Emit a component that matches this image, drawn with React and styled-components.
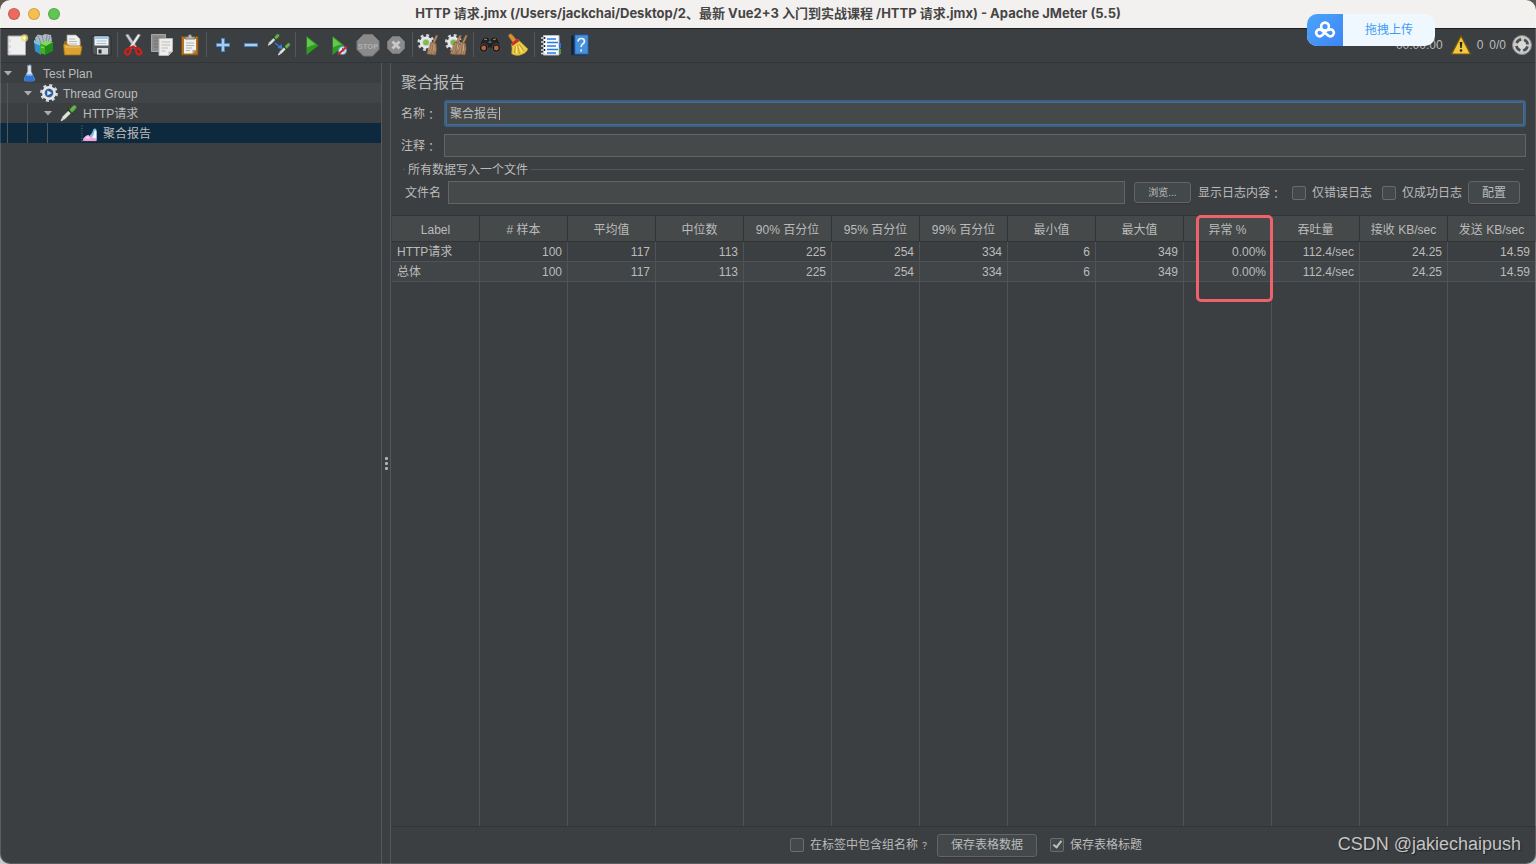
import React from "react";
import styled, { createGlobalStyle, css } from "styled-components";

const GlobalStyle = createGlobalStyle`
  *, *::before, *::after { box-sizing: border-box; }
  html, body { margin: 0; padding: 0; }
  body {
    background: linear-gradient(#5d574f, #c9c9c9);
    color: #bbbbbb;
    font: 12px/20px "Liberation Sans", "Noto Sans CJK SC", sans-serif;
  }
  button, input { font: inherit; color: inherit; margin: 0; }
`;

const Window = styled.div`
  position: relative;
  display: flex;
  flex-direction: column;
  min-height: 100vh;
  overflow: hidden;
  border-radius: 10px;
  background: #3c3f41;
  &::after {
    content: "";
    position: absolute;
    inset: 0;
    border: 1px solid rgba(255, 255, 255, 0.16);
    border-top: 0;
    border-radius: 10px;
    pointer-events: none;
  }
`;

const TitleBar = styled.header`
  position: relative;
  display: flex;
  align-items: center;
  justify-content: center;
  height: 29px;
  padding-bottom: 2px;
  background: #f3f1f0;
  border-bottom: 1px solid #1c1e20;
`;

const Lights = styled.div`
  position: absolute;
  left: 8px;
  top: 8px;
  display: flex;
  gap: 8px;
`;

const Light = styled.button`
  width: 12px;
  height: 12px;
  padding: 0;
  border: 1px solid rgba(0, 0, 0, 0.15);
  border-radius: 50%;
  background: ${(p) => p.$color};
`;

const WindowTitle = styled.h1`
  margin: 0;
  color: #464544;
  font: 700 13px/20px Inter, "Noto Sans CJK SC", sans-serif;
  white-space: pre;
`;

const Toolbar = styled.nav`
  display: flex;
  align-items: center;
  height: 34px;
  padding: 0 4px 2px 3px;
  border-bottom: 1px solid #323537;
`;

const ToolButton = styled.button`
  display: flex;
  align-items: center;
  justify-content: center;
  width: 28px;
  height: 28px;
  padding: 0;
  border: 0;
  background: none;
  svg { display: block; width: 24px; height: 24px; }
`;

const ToolSeparator = styled.span`
  width: 5px;
  height: 25px;
  background: linear-gradient(#555859, #555859) center / 1px 100% no-repeat;
`;

const Status = styled.div`
  display: flex;
  align-items: center;
  gap: 6px;
  margin-left: auto;
  svg { display: block; }
`;

const Elapsed = styled.time`
  margin-right: 2px;
`;

const UploadBadge = styled.button`
  position: absolute;
  z-index: 2;
  top: 14px;
  right: 101px;
  display: flex;
  width: 128px;
  height: 32px;
  padding: 0;
  overflow: hidden;
  border: 0;
  border-radius: 10px;
  background: #f0f8ff;
  color: #3f9bf5;
  line-height: 32px;
`;

const UploadIcon = styled.span`
  display: flex;
  align-items: center;
  justify-content: center;
  width: 36px;
  height: 32px;
  background: linear-gradient(135deg, #4aa5fa, #3f85f5);
`;

const UploadText = styled.span`
  flex: 1;
  text-align: center;
`;

const Body = styled.div`
  display: flex;
  flex: 1;
`;

const Tree = styled.ul`
  flex: none;
  width: 382px;
  margin: 0;
  padding: 0;
  list-style: none;
  border-right: 1px solid #565859;
`;

const TreeRow = styled.li`
  display: flex;
  align-items: center;
  height: 20px;
  padding-left: 3px;
  background: ${(p) => (p.$selected ? "#0d293e" : p.$striped ? "#414547" : "none")};
  svg { display: block; flex: none; }
`;

const Guide = styled.span`
  flex: none;
  width: 20px;
  height: 20px;
  background: linear-gradient(#55585a, #55585a) 4px 0 / 1px 100% no-repeat;
`;

const Caret = styled.span`
  flex: none;
  width: 10px;
  height: 5px;
  margin-right: 6px;
  background: #adadad;
  clip-path: polygon(5% 0, 95% 0, 50% 100%);
  visibility: ${(p) => (p.$hidden ? "hidden" : "visible")};
`;

const TreeLabel = styled.span`
  margin-left: 4px;
  padding-top: 2px;
  white-space: nowrap;
`;

const Splitter = styled.div`
  display: flex;
  flex: none;
  flex-direction: column;
  align-items: center;
  justify-content: center;
  gap: 2px;
  width: 9px;
  border-right: 1px solid #585755;
`;

const Grip = styled.span`
  width: 3px;
  height: 3px;
  border-radius: 1px;
  background: #afb1b3;
`;

const Report = styled.main`
  display: flex;
  flex: 1;
  flex-direction: column;
  min-width: 0;
`;

const Form = styled.form`
  display: flex;
  flex-direction: column;
  padding: 8px 10px 11px;
`;

const Heading = styled.h2`
  margin: 0 0 5px;
  font-size: 16px;
  font-weight: 400;
  line-height: 24px;
`;

const Field = styled.div`
  display: flex;
  align-items: center;
  height: 27px;
  & + & { margin-top: 5px; }
`;

const FieldLabel = styled.label`
  flex: none;
  width: 43px;
  white-space: nowrap;
`;

const TextInput = styled.input`
  flex: 1;
  min-width: 0;
  height: 23px;
  padding: 0 5px;
  border: 1px solid #646464;
  border-radius: 0;
  outline: 0;
  background: #45494a;
  ${(p) =>
    p.$focused &&
    css`
      height: 27px;
      padding: 0 4px 2px;
      border: 2px solid #3d6185;
      border-radius: 3px;
      box-shadow: inset 0 0 0 1px #466d94;
    `}
`;

const NameBox = styled.div`
  position: relative;
  display: flex;
  flex: 1;
`;

const TextCursor = styled.span`
  position: absolute;
  left: 55px;
  top: 7px;
  width: 1px;
  height: 13px;
  background: #bbbbbb;
`;

const FileGroup = styled.fieldset`
  display: flex;
  align-items: center;
  margin: 0 2px;
  padding: 2px 4px 0 2px;
  min-width: 0;
  border: 0;
  border-top: 1px solid #55585a;
`;

const Legend = styled.legend`
  height: 20px;
  padding: 0 3px;
  line-height: 22px;
`;

const Button = styled.button`
  flex: none;
  width: ${(p) => p.$width};
  height: ${(p) => (p.$small ? "21px" : "23px")};
  padding: 0;
  border: 1px solid #646464;
  border-radius: 3px;
  background: #43494a;
  box-shadow: 0 1px 1px #35383a;
  font-size: ${(p) => (p.$small ? "10px" : "12px")};
  line-height: 20px;
  white-space: nowrap;
`;

const FileActions = styled.div`
  display: flex;
  flex: none;
  align-items: center;
  margin-left: 9px;
`;

const Caption = styled.span`
  width: 94px;
  margin-left: 7px;
  white-space: nowrap;
`;

const Check = styled.label`
  display: flex;
  flex: none;
  align-items: center;
  gap: 6px;
  white-space: nowrap;
`;

const CheckInput = styled.input`
  appearance: none;
  width: 14px;
  height: 14px;
  border: 1px solid #6b6b6b;
  border-radius: 2px;
  background: #43494a;
  &:checked::after {
    content: "";
    display: block;
    width: 5px;
    height: 9px;
    margin: 0 0 0 4px;
    border: solid #c0c0c0;
    border-width: 0 2px 2px 0;
    transform: rotate(38deg);
  }
`;

const ChecksRow = styled.div`
  display: flex;
  gap: 10px;
  margin-right: 6px;
`;

const Colon = styled.span`
  font-family: "Noto Sans CJK TC", sans-serif;
  line-height: 12px;
  vertical-align: -2px;
`;

const QuestionMark = styled.span`
  margin-left: 2px;
  font-family: "Noto Sans CJK TC", sans-serif;
  font-size: 9px;
`;

const TableArea = styled.div`
  display: flex;
  flex: 1;
  padding-left: 1px;
  border-top: 1px solid #323537;
  border-bottom: 1px solid #323537;
`;

const Table = styled.table`
  width: 100%;
  border-collapse: separate;
  border-spacing: 0;
  table-layout: fixed;
`;

const Th = styled.th`
  position: relative;
  height: 26px;
  padding: 3px 0 0;
  border-right: 1px solid #323537;
  border-bottom: 1px solid #323537;
  background: #45494a;
  font-weight: 400;
  white-space: nowrap;
`;

const Td = styled.td`
  height: ${(p) => (p.$filler ? "auto" : "20px")};
  padding: ${(p) => (p.$filler ? "0" : "2px 5px 0")};
  border-right: 1px solid #505355;
  border-bottom: ${(p) => (p.$filler ? "0" : "1px solid #505355")};
  background: ${(p) => (p.$striped ? "#414547" : "none")};
  line-height: 17px;
  text-align: ${(p) => (p.$first ? "left" : "right")};
  white-space: nowrap;
`;

const Highlight = styled.span`
  position: absolute;
  z-index: 1;
  top: -1px;
  left: 12px;
  width: 77px;
  height: 87px;
  border: 3px solid #f0626b;
  border-radius: 5px;
  pointer-events: none;
`;

const Footer = styled.footer`
  position: relative;
  display: flex;
  align-items: center;
  justify-content: center;
  height: 37px;
  padding: 0 0 1px 5px;
`;

const FooterButton = styled(Button)`
  margin: 0 13px 0 8px;
`;

const Watermark = styled.span`
  position: absolute;
  right: 15px;
  top: 6px;
  color: #c4c5c6;
  font-size: 18px;
  line-height: 22px;
  text-shadow: 1px 1px 1px #202224;
`;

const Svg = ({ children, size = 24 }) => (
  <svg viewBox="0 0 24 24" width={size} height={size} aria-hidden="true">
    {children}
  </svg>
);

const Dropper = ({ x = 0, y = 0, s = 1 }) => (
  <g transform={`translate(${x} ${y}) scale(${s})`}>
    <path d="M3 17l1.500-4L11 6.500l2.500 2.500L7 15.500z" fill="#dfe4df" stroke="#858a85" strokeWidth=".7" />
    <path d="M3 17l2-1.500" stroke="#ddd" strokeWidth="1.500" />
    <path d="M9.500 5l5.500 5.500" stroke="#1f3d18" strokeWidth="2" />
    <path d="M11.500 6l3-3.500q2-2 3.500-.5t-.5 3.500L14 9z" fill="#67b151" stroke="#3e7d30" strokeWidth=".7" />
  </g>
);

const Gear = ({ cx, cy, r, core }) => (
  <g>
    <circle cx={cx} cy={cy} r={r} fill="none" stroke="#d3d7da" strokeWidth="3.500" strokeDasharray={`${(r * Math.PI) / 8} ${(r * Math.PI) / 8}`} />
    <circle cx={cx} cy={cy} r={r - 0.7} fill="#e6e8ea" />
    <circle cx={cx} cy={cy} r={r - 3.2} fill="#c4cad0" />
    <circle cx={cx} cy={cy} r={r - 4} fill={core} />
  </g>
);

const Straw = ({ x = 0 }) => (
  <g transform={`translate(${x} 0)`}>
    <path d="M19.500 2l2 .5-3.500 8-2-1z" fill="#b98b60" stroke="#6b4a30" strokeWidth=".5" />
    <path d="M14.500 9l5 1.500q1.500 5-.5 11.500l-8.500-1q-.5-1.500 1-4z" fill="#b08a66" stroke="#6f4f35" strokeWidth=".6" />
    <path d="M14.500 11l-2.500 9M16.500 11.500l-1.500 9.500M18.500 12l-1 9" stroke="#86644a" strokeWidth=".7" />
    <path d="M13.500 12l-1.500 5M17.500 12v6" stroke="#dcc09a" strokeWidth=".6" />
  </g>
);

const icons = {
  new: (
    <Svg>
      <path d="M3 3h17.500v19H3z" fill="#eeefee" stroke="#a8a8a8" />
      <path d="M5 6v3M5 12v3M5 18v2" stroke="#c5c5c5" />
      <circle cx="19.500" cy="5" r="3.700" fill="#eee26b" opacity=".75" />
      <path d="M19.500 2.500l.8 1.700 1.700.8-1.700.8-.8 1.700-.8-1.700-1.700-.8 1.700-.8z" fill="#fffde0" />
    </Svg>
  ),
  templates: (
    <Svg>
      <path d="M2 5l3-3.500 4 1L12 1l6 1 1 6-7 4-9-3z" fill="#aebac1" />
      <path d="M5 3l3 7M9 2l2 8M14 2l-1 8M17 3l-2 6" stroke="#7e8c95" />
      <path d="M1 7l7 3v12l-6-4z" fill="#348fc7" />
      <path d="M1 7l7 3v3L1 10z" fill="#78c4e9" />
      <path d="M7 10l6 3v9l-6-2z" fill="#3fae29" />
      <path d="M12 12l8-3v9l-8 4z" fill="#1f8c1c" />
      <path d="M7 10l7-2 6 1-7 4z" fill="#80da55" />
      <path d="M8 14l3 1" stroke="#8fe070" />
    </Svg>
  ),
  open: (
    <Svg>
      <path d="M3 22V9q0-1 1-1h16v13z" fill="#9b6910" />
      <path d="M6 14V2h9l4 4v9z" fill="#f1f1ee" stroke="#a2a29e" strokeWidth=".7" />
      <path d="M8 6h6M8 8.500h8M8 11h8" stroke="#b8b8b6" />
      <path d="M2.500 12q0-1 1-1h3l1.500 2H20q1 0 1 1l-1.500 8h-16z" fill="#dca331" stroke="#a06c15" strokeWidth=".8" />
      <path d="M4 14h15" stroke="#f3cf77" />
    </Svg>
  ),
  save: (
    <Svg>
      <path d="M3 4q0-1 1-1h17q1 0 1 1v18H5l-2-2z" fill="#4f5557" stroke="#292c2e" />
      <path d="M5.500 3.500h14v9h-14z" fill="#eff4f8" />
      <path d="M5.500 3.500h14v2.500h-14z" fill="#a3c8ed" />
      <path d="M7.500 8h10M7.500 10.500h10" stroke="#adbac3" />
      <path d="M8 15h11v6.500H8z" fill="#d3d7d8" />
      <path d="M9.500 16.500h3v4h-3z" fill="#303335" />
    </Svg>
  ),
  cut: (
    <Svg>
      <path d="M3.500 2l2.500-1 8.500 12.500-2 2.500z" fill="#c8cccd" stroke="#7e8284" strokeWidth=".5" />
      <path d="M18.500 2L16 1 7.500 14l2 2z" fill="#eceeee" stroke="#85898b" strokeWidth=".5" />
      <ellipse cx="5.800" cy="18.500" rx="2.300" ry="3.200" transform="rotate(35 5.800 18.500)" fill="none" stroke="#d31e1c" strokeWidth="2.200" />
      <ellipse cx="16.500" cy="18.500" rx="2.300" ry="3.200" transform="rotate(-35 16.500 18.500)" fill="none" stroke="#d31e1c" strokeWidth="2.200" />
      <path d="M7 15.500l4-2 4 2.500" fill="none" stroke="#c51917" strokeWidth="2" />
    </Svg>
  ),
  copy: (
    <Svg>
      <path d="M1.500 1.500h14v17h-14z" fill="#8b8c8b" stroke="#a5a6a5" />
      <path d="M4 5h8M4 8h6M4 11h5M4 14h5" stroke="#737473" />
      <path d="M9 5.500h13.500v13l-4 4H9z" fill="#eeeeec" stroke="#b5b5b3" />
      <path d="M11.500 9H20M11.500 12H20M11.500 15H18M11.500 18h4" stroke="#bbb" />
      <path d="M22.500 18.500h-4v4z" fill="#b8b8b6" />
    </Svg>
  ),
  paste: (
    <Svg>
      <path d="M3.500 3.500h16.500v18.500H3.500z" fill="#b57522" stroke="#7d4a10" />
      <path d="M6 6h12v11l-3.500 3.500H6z" fill="#f0f0ec" />
      <path d="M8 10h8M8 12.500h8M8 15h6M8 17.500h4" stroke="#b5b5b5" />
      <path d="M7 6V4h3q0-2.500 2-2.500T14 4h3v2z" fill="#b9bbb6" stroke="#696b67" strokeWidth=".8" />
      <path d="M18 17h-3.500v3.500z" fill="#a5a5a0" />
    </Svg>
  ),
  plus: (
    <Svg>
      <path d="M10.500 5.500h3v5h5v3h-5v5h-3v-5h-5v-3h5z" fill="#a8cdf2" stroke="#4e86be" />
    </Svg>
  ),
  minus: (
    <Svg>
      <path d="M5.500 10.500h13v3h-13z" fill="#a8cdf2" stroke="#4e86be" />
    </Svg>
  ),
  toggle: (
    <Svg>
      <Dropper x={-1} y={0} s={0.72} />
      <Dropper x={9} y={9} s={0.76} />
      <path d="M8 10l5 4" stroke="#3c7fe0" strokeWidth="1.500" />
      <path d="M15.500 16l-1-5-4 4z" fill="#3c7fe0" />
    </Svg>
  ),
  start: (
    <Svg>
      <path d="M6.500 3l12 9.500L6.500 22z" fill="#2f9b20" />
      <path d="M7 4.500l8.500 7q-4 .5-8.500 3z" fill="#62c74e" />
    </Svg>
  ),
  noPauses: (
    <Svg>
      <path d="M4.500 3l12 9.500L4.500 22z" fill="#2f9b20" />
      <path d="M5 4.500l8.500 7q-4 .5-8.500 3z" fill="#62c74e" />
      <circle cx="14.500" cy="17.500" r="4" fill="#d9ebfa" stroke="#568fc5" />
      <path d="M14.500 15v3h2" fill="none" stroke="#4a6c93" />
      <path d="M10 21.500l9-8" stroke="#dc2020" strokeWidth="1.700" />
    </Svg>
  ),
  stop: (
    <Svg>
      <path d="M7.500 1.500h9L23 8v8.500L16.500 23h-9L1 16.500V8z" fill="#8b8b8b" stroke="#777" />
      <text x="12" y="15.500" textAnchor="middle" fontFamily="Liberation Sans, sans-serif" fontWeight="700" fontSize="7.500" fill="#b0b0b0">STOP</text>
    </Svg>
  ),
  shutdown: (
    <Svg>
      <path d="M8.500 3.500h7l5 5v7l-5 5h-7l-5-5v-7z" fill="#8b8b8b" stroke="#777" />
      <path d="M8.500 8.500l7 7M15.500 8.500l-7 7" stroke="#c9c9c9" strokeWidth="2.800" />
    </Svg>
  ),
  clear: (
    <Svg>
      <Gear cx={9} cy={9.500} r={6.800} core="#7abf4a" />
      <Straw x={-0.500} />
    </Svg>
  ),
  clearAll: (
    <Svg>
      <Gear cx={8.500} cy={9.500} r={6.800} core="#7abf4a" />
      <Straw x={-5} />
      <Straw x={1} />
    </Svg>
  ),
  search: (
    <Svg>
      <path d="M4 9l2-4 4 .5 1 3h2l1-3 4-.5 2 4 2.500 6h-9l-1.500-3-1.500 3h-9z" fill="#242424" stroke="#0c0c0c" strokeWidth=".7" />
      <path d="M6 6l3 .5M15 6.500l3-.5M10.500 9h3" stroke="#929292" />
      <circle cx="5.700" cy="15" r="4.200" fill="#171717" stroke="#555" strokeWidth=".8" />
      <circle cx="18.300" cy="15" r="4.200" fill="#171717" stroke="#555" strokeWidth=".8" />
      <circle cx="5.700" cy="15" r="2.400" fill="#b36242" />
      <circle cx="18.300" cy="15" r="2.400" fill="#b36242" />
    </Svg>
  ),
  reset: (
    <Svg>
      <path d="M3 1.500q2-1.500 3.500.5l4 5-3.500 3-4-6q-1-1.500 0-2.500z" fill="#d49239" stroke="#925c1d" strokeWidth=".6" />
      <path d="M5.500 11l6.500-4.500 10 9.500q-2 5-9.500 6.500-5 0-7-2 1-4 0-9.500z" fill="#e8cc46" stroke="#a88a1e" strokeWidth=".6" />
      <path d="M5.500 10l6-4.500 2 2.500-7 5z" fill="#cb3128" />
      <path d="M9.500 13l-1 7M11.500 12l2 9M13 11l5 7" stroke="#b8961f" strokeWidth=".9" />
      <path d="M10.500 13v7M13 13l3 6" stroke="#fff19b" strokeWidth=".8" />
    </Svg>
  ),
  functions: (
    <Svg>
      <path d="M4.500 2.500h15.500v19.500H4.500z" fill="#fafcff" stroke="#b6bfc9" />
      <path d="M8 6h9M8 9.500h11M8 13h9M8 16.500h11M8 20h9" stroke="#2879e4" strokeWidth="1.500" />
      <path d="M2 5h4M2 9h4M2 13h4M2 17h4M2 20.500h4" stroke="#dadada" strokeWidth="1.500" />
      <path d="M5.500 4v2M5.500 8v2M5.500 12v2M5.500 16v2" stroke="#222" strokeWidth="1.500" />
      <path d="M20 10h2v5h-2z" fill="#2376e5" />
      <path d="M20 16h2v5h-2z" fill="#3ba138" />
    </Svg>
  ),
  help: (
    <Svg>
      <path d="M4 3l2-1.500h15V21l-2 1.500H4z" fill="#1c3660" />
      <path d="M8 2h13v19H8z" fill="#4690dc" stroke="#2868ae" strokeWidth=".8" />
      <path d="M5.500 3v18.500" stroke="#101e33" strokeWidth="2" />
      <path d="M11 8.500q.3-3 3.300-3t3.200 2.700q0 1.600-1.800 2.700-1.500 1-1.500 3.100M14.200 16.500v2" fill="none" stroke="#eef6ff" strokeWidth="1.700" />
    </Svg>
  ),
  flask: (
    <Svg size={20}>
      <path d="M10 3h4.500M10.500 3v7L6.500 19q-.5 2.500 1.500 2.500h9q2 0 1.500-2.500L14.500 10V3" fill="#dbe5f0" stroke="#92a6bb" strokeWidth=".8" />
      <path d="M8.500 14h8l2.200 5q.5 3-1.700 3h-9q-2 0-1.700-3z" fill="#2f75d5" />
      <path d="M9 14.500h7" stroke="#79b4f4" strokeWidth="1.500" />
      <path d="M12.500 1l1.500 2" stroke="#79aadc" />
    </Svg>
  ),
  gear: (
    <Svg size={20}>
      <Gear cx={12} cy={12} r={9} core="#2e5d9c" />
      <path d="M10 9l5.500 3-5.500 3z" fill="#dcecff" />
    </Svg>
  ),
  dropper: (
    <Svg size={20}>
      <Dropper x={-1} y={1} s={1.180} />
    </Svg>
  ),
  chart: (
    <Svg size={20}>
      <path d="M3.500 3v19M4 21.500h17" stroke="#8c949b" strokeDasharray="1 2" />
      <path d="M13 21V15q3-2 4-7 2-3 4 0v13z" fill="#7fb6ee" />
      <path d="M15 18q3-3 3.500-8 1.500-2 2.500 0v9z" fill="#f2f8ff" />
      <path d="M5 21.500v-3q3-4 6-4.500 3 3 5 3.500 3 1.500 5 1v3z" fill="#f0a2dd" />
      <path d="M7 18.500q2-2.500 4-3 1 2 3 3z" fill="#fbdcf4" />
    </Svg>
  ),
};

const toolGroups = [
  [["new", "New"], ["templates", "Templates"], ["open", "Open"], ["save", "Save"]],
  [["cut", "Cut"], ["copy", "Copy"], ["paste", "Paste"]],
  [["plus", "Expand All"], ["minus", "Collapse All"], ["toggle", "Toggle"]],
  [["start", "Start"], ["noPauses", "Start no pauses"], ["stop", "Stop"], ["shutdown", "Shutdown"]],
  [["clear", "Clear"], ["clearAll", "Clear All"]],
  [["search", "Search"], ["reset", "Reset Search"]],
  [["functions", "Function Helper"], ["help", "Help"]],
];

const treeItems = [
  { label: "Test Plan", icon: "flask" },
  { label: "Thread Group", icon: "gear" },
  { label: "HTTP请求", icon: "dropper" },
  { label: "聚合报告", icon: "chart", leaf: true, selected: true },
];

const columns = [
  "Label", "# 样本", "平均值", "中位数", "90% 百分位", "95% 百分位", "99% 百分位",
  "最小值", "最大值", "异常 %", "吞吐量", "接收 KB/sec", "发送 KB/sec",
];

const values = ["100", "117", "113", "225", "254", "334", "6", "349", "0.00%", "112.4/sec", "24.25", "14.59"];
const rows = [["HTTP请求", ...values], ["总体", ...values]];

export default function App() {
  return (
    <>
      <GlobalStyle />
      <Window>
        <TitleBar>
          <Lights>
            <Light $color="#ed6a5e" aria-label="Close" />
            <Light $color="#f5bf4f" aria-label="Minimize" />
            <Light $color="#61c554" aria-label="Zoom" />
          </Lights>
          <WindowTitle>HTTP 请求.jmx (/Users/jackchai/Desktop/2、最新 Vue2+3 入门到实战课程 /HTTP 请求.jmx) - Apache JMeter (5.5)</WindowTitle>
        </TitleBar>

        <UploadBadge>
          <UploadIcon>
            <svg width="22" height="18" viewBox="0 0 22 18" aria-hidden="true">
              <g fill="none" stroke="#fff" strokeWidth="2.600">
                <circle cx="11" cy="5.500" r="3.900" />
                <path d="M13 9l-4.500 5q-2.500 2.500-5 .5-2.500-2.500-.5-5 2.500-2.200 5 0L13.500 14q2.500 2.500 5 .5 2.500-2.500.5-5-2.500-2.200-5 0" />
              </g>
            </svg>
          </UploadIcon>
          <UploadText>拖拽上传</UploadText>
        </UploadBadge>

        <Toolbar aria-label="Toolbar">
          {toolGroups.map((group, i) => (
            <React.Fragment key={i}>
              {i > 0 && <ToolSeparator />}
              {group.map(([icon, label]) => (
                <ToolButton key={icon} aria-label={label}>{icons[icon]}</ToolButton>
              ))}
            </React.Fragment>
          ))}
          <Status>
            <Elapsed>00:00:00</Elapsed>
            <svg width="20" height="20" viewBox="0 0 20 20" aria-label="Warnings">
              <path d="M10 1L19.300 19H.700z" fill="#f4c83c" stroke="#7d5c0c" strokeWidth="1.200" strokeLinejoin="round" />
              <path d="M8.700 7h2.600l-.6 6H9.300z" fill="#222" />
              <circle cx="10" cy="15.500" r="1.300" fill="#222" />
            </svg>
            <span>0</span>
            <span>0/0</span>
            <svg width="20" height="22" viewBox="0 0 20 22" aria-hidden="true">
              <circle cx="10" cy="11" r="9.500" fill="#c9c9c9" stroke="#8a8a8a" />
              <circle cx="10" cy="11" r="5.500" fill="none" stroke="#4b4d4e" strokeWidth="3" strokeDasharray="5.600 3.040" strokeDashoffset="-1.500" />
              <circle cx="10" cy="11" r="4" fill="#d8d8d8" />
            </svg>
          </Status>
        </Toolbar>

        <Body>
          <Tree>
            {treeItems.map((item, depth) => (
              <TreeRow key={item.label} $selected={item.selected} $striped={depth === 1}>
                {Array.from({ length: depth }, (_, i) => <Guide key={i} />)}
                <Caret $hidden={item.leaf} />
                {icons[item.icon]}
                <TreeLabel>{item.label}</TreeLabel>
              </TreeRow>
            ))}
          </Tree>
          <Splitter>
            <Grip />
            <Grip />
            <Grip />
          </Splitter>

          <Report>
            <Form onSubmit={(e) => e.preventDefault()}>
              <Heading>聚合报告</Heading>
              <Field>
                <FieldLabel htmlFor="name">名称<Colon>：</Colon></FieldLabel>
                <NameBox>
                  <TextInput id="name" defaultValue="聚合报告" $focused />
                  <TextCursor />
                </NameBox>
              </Field>
              <Field>
                <FieldLabel htmlFor="comment">注释<Colon>：</Colon></FieldLabel>
                <TextInput id="comment" />
              </Field>
              <FileGroup>
                <Legend>所有数据写入一个文件</Legend>
                <FieldLabel htmlFor="file">文件名</FieldLabel>
                <TextInput id="file" />
                <FileActions>
                  <Button type="button" $width="57px" $small>浏览...</Button>
                  <Caption>显示日志内容<Colon>：</Colon></Caption>
                  <ChecksRow>
                    <Check><CheckInput type="checkbox" />仅错误日志</Check>
                    <Check><CheckInput type="checkbox" />仅成功日志</Check>
                  </ChecksRow>
                  <Button type="button" $width="52px">配置</Button>
                </FileActions>
              </FileGroup>
            </Form>

            <TableArea>
              <Table>
                <thead>
                  <tr>
                    {columns.map((name) => (
                      <Th key={name} scope="col">
                        {name}
                        {name === "异常 %" && <Highlight />}
                      </Th>
                    ))}
                  </tr>
                </thead>
                <tbody>
                  {rows.map((row, r) => (
                    <tr key={row[0]}>
                      {row.map((value, c) => (
                        <Td key={c} $first={c === 0} $striped={r === 1}>{value}</Td>
                      ))}
                    </tr>
                  ))}
                  <tr aria-hidden="true">
                    {columns.map((name) => <Td key={name} $filler />)}
                  </tr>
                </tbody>
              </Table>
            </TableArea>

            <Footer>
              <Check><CheckInput type="checkbox" /><span>在标签中包含组名称<QuestionMark>？</QuestionMark></span></Check>
              <FooterButton type="button" $width="100px">保存表格数据</FooterButton>
              <Check><CheckInput type="checkbox" defaultChecked />保存表格标题</Check>
              <Watermark>CSDN @jakiechaipush</Watermark>
            </Footer>
          </Report>
        </Body>
      </Window>
    </>
  );
}
